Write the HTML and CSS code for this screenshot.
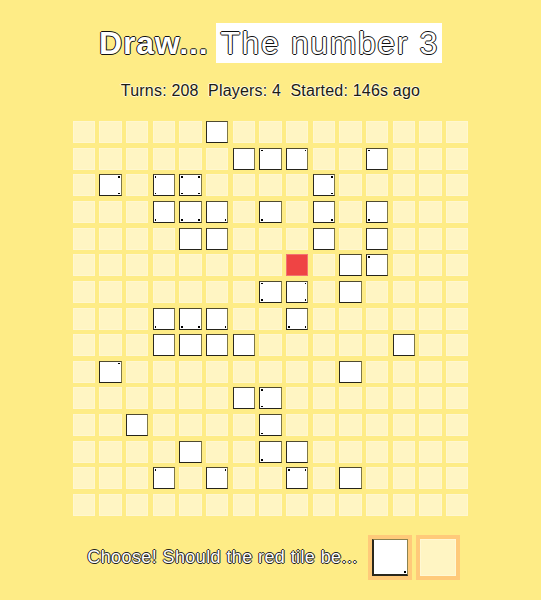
FILE: index.html
```html
<!DOCTYPE html>
<html>
<head>
<meta charset="utf-8">
<link rel="stylesheet" href="styles.css">
</head>
<body>
<div class="page">
  <h1 class="title"><span class="draw">Draw...</span><span class="word">The number 3</span></h1>
  <div class="stats">Turns: 208  Players: 4  Started: 146s ago</div>
  <div class="grid">
    <div class="c"></div><div class="c"></div><div class="c"></div><div class="c"></div><div class="c"></div><div class="c w"></div><div class="c"></div><div class="c"></div><div class="c"></div><div class="c"></div><div class="c"></div><div class="c"></div><div class="c"></div><div class="c"></div><div class="c"></div>
    <div class="c"></div><div class="c"></div><div class="c"></div><div class="c"></div><div class="c"></div><div class="c"></div><div class="c w"></div><div class="c w"><span class="d tl"></span></div><div class="c w"><span class="d tr"></span></div><div class="c"></div><div class="c"></div><div class="c w"><span class="d tl"></span></div><div class="c"></div><div class="c"></div><div class="c"></div>
    <div class="c"></div><div class="c w"><span class="d tr"></span><span class="d br"></span></div><div class="c"></div><div class="c w"><span class="d tl"></span><span class="d bl"></span></div><div class="c w"><span class="d tl"></span><span class="d tr"></span><span class="d bl"></span><span class="d br"></span></div><div class="c"></div><div class="c"></div><div class="c"></div><div class="c"></div><div class="c w"><span class="d tr"></span><span class="d br"></span></div><div class="c"></div><div class="c"></div><div class="c"></div><div class="c"></div><div class="c"></div>
    <div class="c"></div><div class="c"></div><div class="c"></div><div class="c w"><span class="d bl"></span></div><div class="c w"><span class="d bl"></span><span class="d br"></span></div><div class="c w"><span class="d br"></span></div><div class="c"></div><div class="c w"><span class="d bl"></span></div><div class="c"></div><div class="c w"><span class="d br"></span></div><div class="c"></div><div class="c w"><span class="d bl"></span></div><div class="c"></div><div class="c"></div><div class="c"></div>
    <div class="c"></div><div class="c"></div><div class="c"></div><div class="c"></div><div class="c w"></div><div class="c w"></div><div class="c"></div><div class="c"></div><div class="c"></div><div class="c w"></div><div class="c"></div><div class="c w"></div><div class="c"></div><div class="c"></div><div class="c"></div>
    <div class="c"></div><div class="c"></div><div class="c"></div><div class="c"></div><div class="c"></div><div class="c"></div><div class="c"></div><div class="c"></div><div class="c red"></div><div class="c"></div><div class="c w"></div><div class="c w"><span class="d tl"></span></div><div class="c"></div><div class="c"></div><div class="c"></div>
    <div class="c"></div><div class="c"></div><div class="c"></div><div class="c"></div><div class="c"></div><div class="c"></div><div class="c"></div><div class="c w"><span class="d tl"></span><span class="d bl"></span></div><div class="c w"><span class="d tr"></span><span class="d br"></span></div><div class="c"></div><div class="c w"></div><div class="c"></div><div class="c"></div><div class="c"></div><div class="c"></div>
    <div class="c"></div><div class="c"></div><div class="c"></div><div class="c w"><span class="d bl"></span></div><div class="c w"><span class="d bl"></span><span class="d br"></span></div><div class="c w"><span class="d br"></span></div><div class="c"></div><div class="c"></div><div class="c w"><span class="d bl"></span><span class="d br"></span></div><div class="c"></div><div class="c"></div><div class="c"></div><div class="c"></div><div class="c"></div><div class="c"></div>
    <div class="c"></div><div class="c"></div><div class="c"></div><div class="c w"></div><div class="c w"></div><div class="c w"></div><div class="c w"></div><div class="c"></div><div class="c"></div><div class="c"></div><div class="c"></div><div class="c"></div><div class="c w"></div><div class="c"></div><div class="c"></div>
    <div class="c"></div><div class="c w"><span class="d tr"></span></div><div class="c"></div><div class="c"></div><div class="c"></div><div class="c"></div><div class="c"></div><div class="c"></div><div class="c"></div><div class="c"></div><div class="c w"></div><div class="c"></div><div class="c"></div><div class="c"></div><div class="c"></div>
    <div class="c"></div><div class="c"></div><div class="c"></div><div class="c"></div><div class="c"></div><div class="c"></div><div class="c w"></div><div class="c w"><span class="d tl"></span><span class="d bl"></span></div><div class="c"></div><div class="c"></div><div class="c"></div><div class="c"></div><div class="c"></div><div class="c"></div><div class="c"></div>
    <div class="c"></div><div class="c"></div><div class="c w"></div><div class="c"></div><div class="c"></div><div class="c"></div><div class="c"></div><div class="c w"><span class="d bl"></span></div><div class="c"></div><div class="c"></div><div class="c"></div><div class="c"></div><div class="c"></div><div class="c"></div><div class="c"></div>
    <div class="c"></div><div class="c"></div><div class="c"></div><div class="c"></div><div class="c w"></div><div class="c"></div><div class="c"></div><div class="c w"><span class="d bl"></span></div><div class="c w"></div><div class="c"></div><div class="c"></div><div class="c"></div><div class="c"></div><div class="c"></div><div class="c"></div>
    <div class="c"></div><div class="c"></div><div class="c"></div><div class="c w"><span class="d tl"></span></div><div class="c"></div><div class="c w"><span class="d tr"></span></div><div class="c"></div><div class="c"></div><div class="c w"><span class="d tl"></span><span class="d tr"></span></div><div class="c"></div><div class="c w"></div><div class="c"></div><div class="c"></div><div class="c"></div><div class="c"></div>
    <div class="c"></div><div class="c"></div><div class="c"></div><div class="c"></div><div class="c"></div><div class="c"></div><div class="c"></div><div class="c"></div><div class="c"></div><div class="c"></div><div class="c"></div><div class="c"></div><div class="c"></div><div class="c"></div><div class="c"></div>
  </div>
  <div class="choose">
    <span class="prompt">Choose! Should the red tile be...</span>
    <div class="opt"><div class="inner white"><span class="d br"></span></div></div>
    <div class="opt"><div class="inner cream"></div></div>
  </div>
</div>
</body>
</html>
```
FILE: styles.css
```css
html, body {
  margin: 0;
  padding: 0;
  background: #feec86;
}
body {
  width: 541px;
  height: 600px;
  overflow: hidden;
  font-family: "Liberation Sans", Arial, sans-serif;
}
.page {
  display: flex;
  flex-direction: column;
  align-items: center;
  padding-top: 23px;
}
.title {
  margin: 0;
  display: flex;
  align-items: center;
  gap: 8px;
  height: 40px;
  font-size: 32px;
  font-weight: normal;
  color: #fff;
  text-shadow: 1px 0 0 #111, -1px 0 0 #111, 0 1px 0 #111, 0 -1px 0 #111;
}
.title .draw {
  font-weight: bold;
  letter-spacing: 0.8px;
}
.title .word {
  background: #fff;
  padding: 0 3px 0 4px;
  line-height: 40px;
  letter-spacing: 1.6px;
}
.stats {
  margin-top: 19px;
  font-size: 16px;
  line-height: 18px;
  white-space: pre;
  letter-spacing: 0.2px;
  color: #1c1b14;
  text-shadow: 1px 0 0 #fff9d6, -1px 0 0 #fff9d6, 0 1px 0 #fff9d6, 0 -1px 0 #fff9d6;
}
.grid {
  margin-top: 18.6px;
  width: 400px;
  display: grid;
  grid-template-columns: repeat(15, 1fr);
  grid-auto-rows: 26.667px;
}
.c {
  margin: 2.333px;
  box-sizing: border-box;
  background: #fff5c3;
  border: 1px solid #fff7cf;
  position: relative;
}
.c.w {
  background: #fff;
  border-color: #4f4a30 #7e7748 #24231a #2c2a20;
}
.c.red {
  background: #ef4444;
  border-color: #f27272;
}
.d {
  position: absolute;
  width: 1.5px;
  height: 1.5px;
  background: #000;
}
.d.tl { top: 1px; left: 1px; }
.d.tr { top: 1px; right: 1px; }
.d.bl { bottom: 1px; left: 1px; }
.d.br { bottom: 1px; right: 1px; }
.choose {
  margin-top: 16.3px;
  margin-left: 6px;
  display: flex;
  align-items: center;
}
.prompt {
  font-size: 18px;
  letter-spacing: 0.4px;
  color: #fff;
  margin-right: 10px;
  text-shadow: 1px 0 0 #222, -1px 0 0 #222, 0 1px 0 #222, 0 -1px 0 #222;
}
.opt {
  width: 44px;
  height: 45px;
  box-sizing: border-box;
  border: 4px solid #ffca7a;
  margin-right: 4px;
  display: flex;
}
.opt:last-child {
  margin-right: 0;
}
.inner {
  flex: 1;
  position: relative;
  box-sizing: border-box;
}
.inner.white {
  background: #fff;
  border-style: solid;
  border-width: 1px 1px 2px 2px;
  border-color: #8b8350 #8b8350 #2a281c #2a281c;
}
.inner.cream {
  background: #fff5c3;
  border: 1px solid #fff8d3;
}
```
